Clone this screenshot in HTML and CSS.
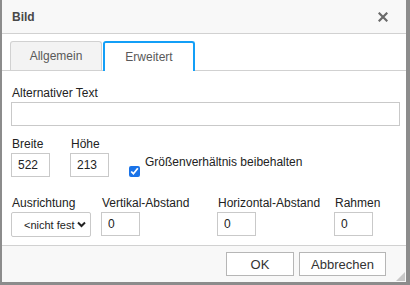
FILE: index.html
```html
<!DOCTYPE html>
<html lang="de">
<head>
    <meta charset="UTF-8">
    <title>Bild</title>
    <link rel="stylesheet" href="styles.css">
</head>
<body>
    <div class="dialog">
        <div class="titlebar">
            <span class="title">Bild</span>
            <svg class="close" width="10" height="10" viewBox="0 0 10 10">
                <path d="M1.5 1.5 L8.5 8.5 M8.5 1.5 L1.5 8.5" stroke="#6a6a6a" stroke-width="2.2" stroke-linecap="square"/>
            </svg>
        </div>

        <div class="tabs">
            <div class="tab">Allgemein</div>
            <div class="tab active">Erweitert</div>
        </div>

        <div class="content">
            <div class="field wide">
                <label>Alternativer Text</label>
                <input type="text" class="text-input">
            </div>

            <div class="size-row">
                <div class="field">
                    <label>Breite</label>
                    <input type="text" class="num-input" value="522">
                </div>
                <div class="field">
                    <label>Höhe</label>
                    <input type="text" class="num-input" value="213">
                </div>
                <div class="ratio">
                    <input type="checkbox" class="check" checked>
                    <span class="ratio-label">Größenverhältnis beibehalten</span>
                </div>
            </div>

            <div class="layout-row">
                <div class="field">
                    <label>Ausrichtung</label>
                    <div class="select">
                        <span class="select-value">&lt;nicht fest</span>
                        <svg width="9" height="7" viewBox="0 0 9 7">
                            <path d="M1 1.5 L4.5 5 L8 1.5" fill="none" stroke="#222" stroke-width="2"/>
                        </svg>
                    </div>
                </div>
                <div class="field">
                    <label>Vertikal-Abstand</label>
                    <input type="text" class="num-input" value="0">
                </div>
                <div class="field">
                    <label>Horizontal-Abstand</label>
                    <input type="text" class="num-input" value="0">
                </div>
                <div class="field">
                    <label>Rahmen</label>
                    <input type="text" class="num-input" value="0">
                </div>
            </div>
        </div>

        <div class="footer">
            <button class="btn ok">OK</button>
            <button class="btn cancel">Abbrechen</button>
            <span class="grip"></span>
        </div>
    </div>
</body>
</html>
```

FILE: styles.css
```css
body {
    margin: 0;
    background: #8c8c8c;
    font-family: 'Liberation Sans', Arial, sans-serif;
    font-size: 12px;
    color: #333;
}

.dialog {
    width: 404px;
    height: 282px;
    margin-left: 2px;
    background: #fff;
    display: flex;
    flex-direction: column;
    position: relative;
}

.titlebar {
    height: 33px;
    background: #f8f8f8;
    border-bottom: 1px solid #d1d1d1;
    display: flex;
    align-items: center;
    justify-content: space-between;
    padding: 0 18px 0 10px;
}

.title {
    font-weight: bold;
    color: #484848;
}

.tabs {
    display: flex;
    gap: 1px;
    padding: 7px 0 0 8px;
    border-bottom: 1px solid #d1d1d1;
}

.tab {
    width: 90px;
    height: 28px;
    border: 1px solid #d1d1d1;
    border-bottom: none;
    border-radius: 3px 3px 0 0;
    background: #f3f3f3;
    display: flex;
    align-items: center;
    justify-content: center;
    color: #595959;
}

.tab.active {
    background: #fff;
    border: 2px solid #139ff7;
    border-bottom: none;
    width: 88px;
    height: 27px;
    margin-bottom: -1px;
    padding-bottom: 1px;
}

.content {
    padding: 15px 9px 0 9px;
}

.field {
    display: flex;
    flex-direction: column;
}

.field label {
    line-height: 14px;
    margin-bottom: 2px;
    padding-left: 1px;
    color: #222;
}

.text-input,
.num-input {
    box-sizing: border-box;
    border: 1px solid #c9c9c9;
    height: 24px;
    font-family: inherit;
    font-size: 12px;
    color: #222;
    padding: 0 6px;
    margin: 0;
    outline: none;
}

.wide .text-input {
    width: 389px;
}

.num-input {
    width: 39px;
}

.size-row {
    display: flex;
    gap: 20px;
    margin-top: 11px;
}

.ratio {
    display: flex;
    align-items: flex-start;
    gap: 5px;
    padding-top: 18px;
}

.check {
    margin: 11px 0 0 0;
    width: 11px;
    height: 11px;
    accent-color: #1a73e8;
}

.ratio-label {
    color: #222;
}

.layout-row {
    display: grid;
    grid-template-columns: 90px 116px 117px auto;
    margin-top: 19px;
}

.select {
    box-sizing: border-box;
    width: 80px;
    height: 25px;
    border: 1px solid #c9c9c9;
    border-radius: 2px;
    display: flex;
    align-items: center;
    justify-content: space-between;
    padding: 0 4px 0 12px;
    font-size: 11px;
    color: #222;
}

.select-value {
    white-space: nowrap;
}

.select svg {
    flex: none;
}

.footer {
    margin-top: auto;
    height: 36px;
    background: #f8f8f8;
    border-top: 1px solid #d1d1d1;
    display: flex;
    align-items: center;
    justify-content: flex-end;
    gap: 5px;
    padding-right: 20px;
}

.btn {
    height: 24px;
    background: #fff;
    border: 1px solid #b6b6b6;
    font-family: inherit;
    font-size: 13px;
    color: #333;
    padding: 0;
}

.ok {
    width: 68px;
}

.cancel {
    width: 87px;
}

.grip {
    position: absolute;
    right: 1px;
    bottom: 1px;
    width: 0;
    height: 0;
    border-left: 9px solid transparent;
    border-bottom: 9px solid #c8c8c8;
}
```
